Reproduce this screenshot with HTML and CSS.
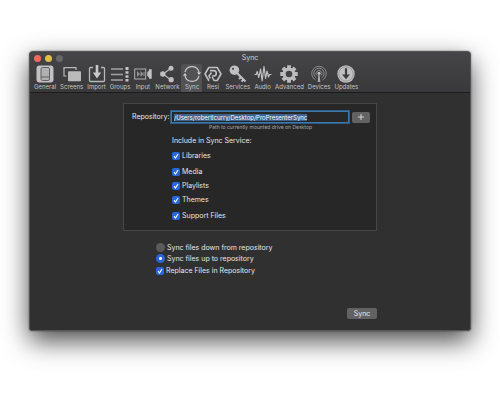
FILE: index.html
```
<!DOCTYPE html>
<html lang="en">
<head>
    <meta charset="UTF-8">
    <meta name="viewport" content="width=device-width, initial-scale=1.0">
    <title>Sync</title>
    <link rel="stylesheet" href="styles.css">
    <script>
        document.addEventListener('DOMContentLoaded', function () {
            const repository = document.getElementById('repository');
            repository.focus();
            repository.select();
        });
    </script>
</head>
<body>
    <div class="window">
        <header class="header">
            <div class="titlebar">
                <div class="lights">
                    <span class="light red"></span>
                    <span class="light yellow"></span>
                    <span class="light gray"></span>
                </div>
                <h1 class="title">Sync</h1>
            </div>
            <nav class="toolbar">
                <button class="tool" type="button">
                    <svg class="icon" viewBox="0 0 18 18"><rect x="0.5" y="0.5" width="17" height="17" rx="3" fill="#c2c2c3"/><rect x="5" y="2.5" width="8.5" height="13" rx="1.5" fill="#b0b0b1" stroke="#626264"/><path d="M5 12h8.5" stroke="#626264"/></svg>
                    <span>General</span>
                </button>
                <button class="tool" type="button">
                    <svg class="icon" viewBox="0 0 18 18"><path d="M3.5 11H1V2.7h12V5" fill="none" stroke="#b8b8b9" stroke-width="1.2"/><rect x="5" y="6.3" width="13" height="10" rx="0.8" fill="#bababb"/></svg>
                    <span>Screens</span>
                </button>
                <button class="tool" type="button">
                    <svg class="icon" viewBox="0 0 18 18"><path d="M5 2.5H2.5q-1 0-1 1v12q0 1 1 1h13q1 0 1-1v-12q0-1-1-1H13" fill="none" stroke="#b8b8b9" stroke-width="1.3"/><path d="M7.7 0h2.6v7.5h2.9L9 13.5 4.8 7.5h2.9z" fill="#c8c8c9"/></svg>
                    <span>Import</span>
                </button>
                <button class="tool" type="button">
                    <svg class="icon" viewBox="0 0 18 18"><path d="M0 4h12M0 9.5h12M0 15h12" stroke="#a2a2a3" stroke-width="1.4"/><path d="M14.5 2h3v3h-3zM14.5 6.3h3v2.5h-3zM14.5 10.2h3v2.5h-3zM14.5 14h3v2.5h-3z" fill="#c4c4c5"/></svg>
                    <span>Groups</span>
                </button>
                <button class="tool" type="button">
                    <svg class="icon" viewBox="0 0 18 18"><rect x="0.7" y="4" width="11" height="10" fill="none" stroke="#b0b0b1"/><path d="M3 6v6l3-3zM6.5 6v6l3-3z" fill="#929294"/><path d="M10 7v4" stroke="#929294"/><path d="M13.3 7.3 15 5.5V4.2h2.7v9.6H15v-1.3l-1.7-1.8z" fill="#c4c4c5"/></svg>
                    <span>Input</span>
                </button>
                <button class="tool" type="button">
                    <svg class="icon" viewBox="0 0 18 18"><path d="M13 3.3 5 9l8 6" fill="none" stroke="#b8b8b9" stroke-width="1.2"/><g fill="#c0c0c1"><circle cx="13" cy="3.3" r="2.5"/><circle cx="4.8" cy="9" r="2.7"/><circle cx="13.2" cy="14.7" r="2.6"/></g></svg>
                    <span>Network</span>
                </button>
                <button class="tool active" type="button">
                    <svg class="icon" viewBox="0 0 18 18"><path d="M2 7.2a7.2 7.2 0 0 1 14 0M16 10.8a7.2 7.2 0 0 1-14 0" fill="none" stroke="#c8c8c9" stroke-width="1.2"/><path d="M14 7.2h4l-2 2.8zM0 10.8h4L2 8z" fill="#d0d0d1"/></svg>
                    <span>Sync</span>
                </button>
                <button class="tool" type="button">
                    <svg class="icon" viewBox="0 0 18 18"><path d="M5.2 15.5H4.8L1 9l3.8-6.5h8.4L17 9l-3.8 6.5H10L8.2 12" fill="none" stroke="#bebebf" stroke-width="1.6" stroke-linejoin="round"/><path d="M6 5.6h3.6a2.7 2.7 0 0 1 0 5.4H8M7.6 7.6 5 10.8l1.2 2.6" fill="none" stroke="#bebebf" stroke-width="1.6"/></svg>
                    <span>Resi</span>
                </button>
                <button class="tool" type="button">
                    <svg class="icon" viewBox="0 0 18 18"><circle cx="5.4" cy="5.2" r="4.8" fill="#c0c0c1"/><circle cx="4" cy="3.8" r="1.1" fill="#454547"/><path d="M7.5 7.5 16.5 16.5M12 12l-2 2M14.5 14.5l-2 2" stroke="#c0c0c1" stroke-width="2"/></svg>
                    <span>Services</span>
                </button>
                <button class="tool" type="button">
                    <svg class="icon" viewBox="0 0 18 18"><path d="M0.5 9.5h1.7l1-3 1.6 6L6.6 4l1.5 12L10 1.5l1.6 12L13 6l1.5 6 1-2.5h2" fill="none" stroke="#c0c0c1" stroke-width="1.2" stroke-linejoin="round"/></svg>
                    <span>Audio</span>
                </button>
                <button class="tool" type="button">
                    <svg class="icon" viewBox="0 0 18 18"><g stroke="#bcbcbd" stroke-width="3.8"><path d="M9 0.3v17.4M0.3 9h17.4M2.9 2.9l12.2 12.2M15.1 2.9 2.9 15.1"/></g><circle cx="9" cy="9" r="6.5" fill="#bcbcbd"/><circle cx="9" cy="9" r="3.3" fill="#434345"/></svg>
                    <span>Advanced</span>
                </button>
                <button class="tool" type="button">
                    <svg class="icon" viewBox="0 0 18 18"><g fill="none" stroke="#919193" stroke-width="0.9"><path d="M5.5 15a7.3 7.3 0 1 1 7 0"/><path d="M6.2 12.8a5.2 5.2 0 1 1 5.6 0"/><path d="M7 10.7a3 3 0 1 1 4 0"/></g><circle cx="9" cy="8.2" r="1.5" fill="#c4c4c5"/><path d="M8.4 9h1.2l0.7 8H7.7z" fill="#a8a8aa"/></svg>
                    <span>Devices</span>
                </button>
                <button class="tool" type="button">
                    <svg class="icon" viewBox="0 0 18 18"><circle cx="9" cy="9" r="8.7" fill="#c0c0c1"/><circle cx="9" cy="9" r="7.2" fill="none" stroke="#88888a" stroke-width="0.7"/><path d="M7.9 3.3h2.2v6.3h2.9L9 14.3 5 9.6h2.9z" fill="#3d3d3f"/></svg>
                    <span>Updates</span>
                </button>
            </nav>
        </header>
        <form class="content">
            <section class="panel">
                <div class="repo-row">
                    <label class="repo-label" for="repository">Repository:</label>
                    <input class="repo-input" id="repository" type="text" value="/Users/robertlcurry/Desktop/ProPresenterSync" spellcheck="false">
                    <button class="button add" type="button" aria-label="Add">
                        <svg class="plus" viewBox="0 0 8 8"><path d="M4 1v6M1 4h6" stroke="#dededf" stroke-width="0.9"/></svg>
                    </button>
                </div>
                <p class="hint">Path to currently mounted drive on Desktop</p>
                <fieldset class="services">
                    <legend>Include in Sync Service:</legend>
                    <label class="option spaced"><input type="checkbox" checked>Libraries</label>
                    <label class="option"><input type="checkbox" checked>Media</label>
                    <label class="option"><input type="checkbox" checked>Playlists</label>
                    <label class="option spaced"><input type="checkbox" checked>Themes</label>
                    <label class="option"><input type="checkbox" checked>Support Files</label>
                </fieldset>
            </section>
            <div class="direction">
                <label class="choice"><input type="radio" name="direction">Sync files down from repository</label>
                <label class="choice"><input type="radio" name="direction" checked>Sync files up to repository</label>
                <label class="option"><input type="checkbox" checked>Replace Files in Repository</label>
            </div>
            <div class="footer">
                <button class="button sync" type="button">Sync</button>
            </div>
        </form>
    </div>
</body>
</html>
```
FILE: styles.css
```
* {
    box-sizing: border-box;
}
body {
    margin: 0;
    padding: 51px 29px;
    background-color: #fff;
    color: #e6e6e7;
    font-family: Inter, sans-serif;
    font-size: 7px;
    line-height: 10px;
}
button, input {
    font-family: inherit;
    font-size: inherit;
    color: inherit;
}
.window {
    background-color: #303031;
    border: 1px solid #555557;
    border-radius: 4px 4px 3px 3px;
    box-shadow: 0 10px 26px rgba(0, 0, 0, 0.7), 0 0 2px rgba(0, 0, 0, 0.5);
    overflow: hidden;
}
.header {
    background: linear-gradient(#454547, #39393b);
    border-bottom: 1px solid #1c1c1d;
}
.titlebar {
    display: grid;
    grid-template-columns: 1fr auto 1fr;
    align-items: center;
    height: 12px;
    padding: 0 4px;
}
.lights {
    display: flex;
    gap: 4px;
}
.light {
    width: 7px;
    height: 7px;
    border-radius: 50%;
}
.red {
    background-color: #ee6a5f;
}
.yellow {
    background-color: #e2bd4b;
}
.gray {
    background-color: #68686a;
}
.title {
    margin: 0;
    font-size: 7px;
    font-weight: 400;
    color: #d0d0d1;
}
.toolbar {
    display: flex;
    padding-left: 2px;
}
.tool {
    display: flex;
    flex-direction: column;
    align-items: center;
    min-width: 21px;
    height: 28px;
    padding: 1px 2px 0;
    border: none;
    border-radius: 2px 2px 0 0;
    background: none;
    font-size: 6px;
    line-height: 8px;
    color: #c4c4c5;
}
.active {
    background-color: #525254;
}
.icon {
    width: 18px;
    height: 18px;
    margin: 0 -1px;
    flex-shrink: 0;
}
.content {
    padding: 10px 93px 11px;
}
.panel {
    background-color: #272728;
    border: 1px solid #464647;
    height: 128px;
    padding: 7px 6px;
}
.repo-row {
    display: flex;
    align-items: center;
    gap: 3px;
    padding-left: 2px;
}
.repo-label {
    width: 36px;
    white-space: nowrap;
}
.repo-input {
    flex: 1;
    min-width: 0;
    height: 12px;
    padding: 0 2px;
    border: 1px solid #3a78ad;
    outline: 1px solid #2c5c87;
    outline-offset: 0;
    background-color: #272728;
    font-size: 6px;
}
.repo-input::selection {
    background-color: #3f638b;
    color: #fff;
}
.button {
    border: none;
    border-radius: 2px;
    background-color: #626263;
    height: 11px;
    padding: 0;
}
.add {
    display: flex;
    align-items: center;
    justify-content: center;
    width: 18px;
}
.plus {
    width: 8px;
    height: 8px;
}
.hint {
    margin: 0 0 5px 79px;
    font-size: 5px;
    line-height: 8px;
    color: #a8a8a9;
}
.services {
    display: flex;
    flex-direction: column;
    margin: 0 0 0 42px;
    padding: 3px 0 0;
    border: none;
}
.services legend {
    padding: 0;
}
.option, .choice {
    display: flex;
    align-items: center;
    gap: 2px;
    height: 14px;
}
.choice {
    height: 11px;
}
.spaced {
    margin-bottom: 2px;
}
input[type="checkbox"], input[type="radio"] {
    appearance: none;
    flex-shrink: 0;
    margin: 0;
    width: 8px;
    height: 8px;
    border-radius: 2px;
    background-color: #5a5a5b;
}
input[type="checkbox"]:checked {
    background: #2866d8 url("data:image/svg+xml,%3Csvg xmlns='http://www.w3.org/2000/svg' viewBox='0 0 8 8'%3E%3Cpath d='M2 4.2 3.5 6 6 2' fill='none' stroke='white' stroke-width='1.1'/%3E%3C/svg%3E");
}
input[type="radio"] {
    width: 9px;
    height: 9px;
    border-radius: 50%;
}
input[type="radio"]:checked {
    background: radial-gradient(circle, #fff 1px, #2866d8 2px);
}
.direction {
    padding: 11px 0 0 33px;
}
.footer {
    display: flex;
    justify-content: flex-end;
    padding-top: 30px;
}
.sync {
    width: 30px;
}
```
